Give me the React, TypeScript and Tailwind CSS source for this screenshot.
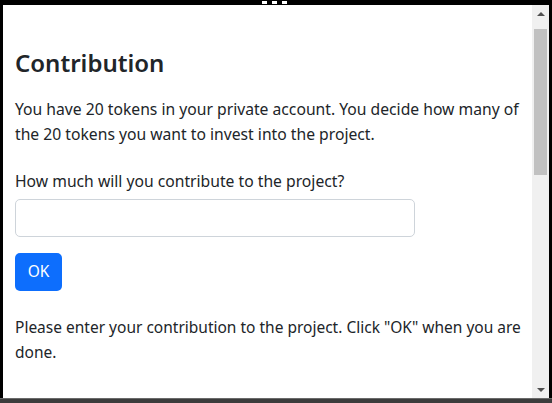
import React from "react";

export default function App() {
  return (
    <div className="w-[552px] h-[403px] bg-black flex flex-col overflow-hidden" style={{ fontFamily: '"Noto Sans", "Open Sans", sans-serif' }}>
      <div className="h-[5px] flex justify-center items-start gap-[5px] pt-[1px] pr-[4px]">
        <div className="w-[5px] h-[3px] bg-white" />
        <div className="w-[5px] h-[3px] bg-white" />
        <div className="w-[5px] h-[3px] bg-white" />
      </div>
      <div className="flex-1 flex min-h-0">
        <div className="w-[3px] bg-black" />
        <div className="flex-1 bg-white text-[#212529] pl-[12px] pr-0 pt-[42px] overflow-hidden">
          <h2 className="text-[24px] font-semibold leading-[31px] mb-[19px]">Contribution</h2>
          <p className="text-[15.7px] leading-[25px] mb-[22px]">
            You have 20 tokens in your private account. You decide how many of the 20 tokens you want to invest into the project.
          </p>
          <p className="text-[15.7px] leading-[25px] mb-[5px]">How much will you contribute to the project?</p>
          <input type="text" className="block w-[400px] h-[38px] border border-[#ced4da] rounded-[5px] px-3 outline-none" />
          <button className="mt-[16px] h-[38px] w-[47px] bg-[#0d6efd] text-white rounded-[5px] text-[15.5px]">OK</button>
          <p className="mt-[24px] text-[15.5px] leading-[25px]">
            Please enter your contribution to the project. Click "OK" when you are done.
          </p>
        </div>
        <div className="w-[17px] bg-[#f0f0f0] flex flex-col items-center">
          <div className="h-[17px] flex items-center justify-center">
            <div className="w-0 h-0 border-l-[4px] border-r-[4px] border-b-[4px] border-l-transparent border-r-transparent border-b-[#505050]" />
          </div>
          <div className="mt-[7px] w-[13px] h-[146px] bg-[#c1c1c1]" />
          <div className="flex-1" />
          <div className="h-[17px] flex items-center justify-center">
            <div className="w-0 h-0 border-l-[4px] border-r-[4px] border-t-[4px] border-l-transparent border-r-transparent border-t-[#505050]" />
          </div>
        </div>
        <div className="w-[3px] bg-black" />
      </div>
      <div className="h-[5px] bg-[#3c3c3c] border-t border-[#6a6a6a]" />
    </div>
  );
}
